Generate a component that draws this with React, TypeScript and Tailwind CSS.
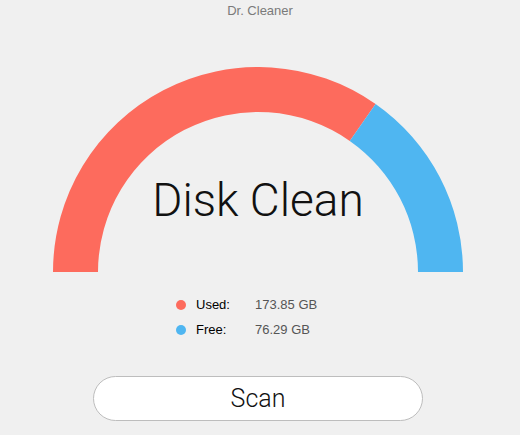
import { FC } from 'react';

const used = 173.85;
const free = 76.29;

export const App: FC = () => {
  return (
    <div className="w-[520px] h-[435px] bg-[#f0f0f0] flex flex-col items-center font-['Roboto',sans-serif] overflow-hidden">
      <div className="h-[67px] pt-[3px] text-[13px] leading-[15px] text-[#7a7a7a] font-['Liberation_Sans',sans-serif]">
        Dr. Cleaner
      </div>

      <div className="relative w-[410px] h-[205px] -ml-[4px] flex justify-center">
        <svg className="absolute inset-0" width="410" height="205" viewBox="0 0 410 205">
          <path d="M0 205 A205 205 0 0 1 322.58 37.07 L296.77 73.93 A160 160 0 0 0 45 205 Z" fill="#fd6b5d" />
          <path d="M322.58 37.07 A205 205 0 0 1 410 205 L365 205 A160 160 0 0 0 296.77 73.93 Z" fill="#4fb6f1" />
        </svg>
        <div className="relative pt-[105px] text-[46px] leading-[56px] font-light text-[#111]">
          Disk Clean
        </div>
      </div>

      <div className="self-start ml-[176px] mt-[28px] flex flex-col gap-[15px] text-[13px] font-['Liberation_Sans',sans-serif]">
        <div className="flex items-center h-[10px]">
          <span className="w-[10px] h-[10px] rounded-full bg-[#fd6b5d]" />
          <span className="ml-[10px] w-[59px] text-black">Used:</span>
          <span className="text-[#555]">{used} GB</span>
        </div>
        <div className="flex items-center h-[10px]">
          <span className="w-[10px] h-[10px] rounded-full bg-[#4fb6f1]" />
          <span className="ml-[10px] w-[59px] text-black">Free:</span>
          <span className="text-[#555]">{free} GB</span>
        </div>
      </div>

      <button className="mt-[41px] -ml-[4px] w-[330px] h-[45px] rounded-full border border-[#bdbdbd] bg-white text-[25px] font-light text-[#111]">
        Scan
      </button>
    </div>
  );
};

export default App;
